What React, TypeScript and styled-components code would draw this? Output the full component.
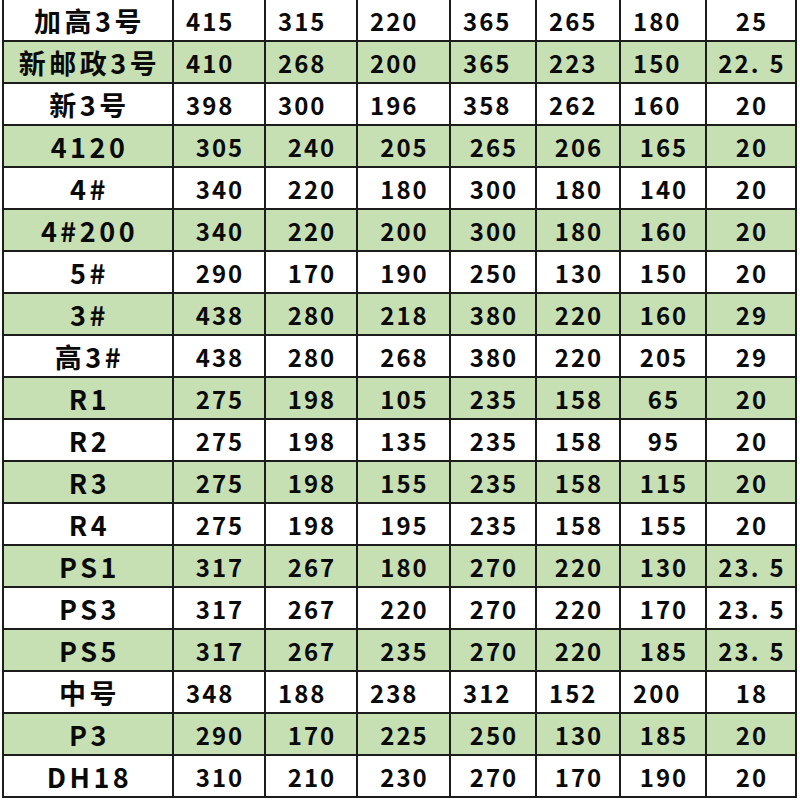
import React from 'react';
import styled, { createGlobalStyle } from 'styled-components';

const GlobalStyle = createGlobalStyle`
    html, body {
        margin: 0;
        padding: 0;
        background: #ffffff;
        overflow: hidden;
    }
`;

const Page = styled.div`
    width: 800px;
    height: 800px;
    overflow: hidden;
    padding-left: 2px;
    box-sizing: border-box;
`;

const Table = styled.table`
    margin-top: -2px;
    border-collapse: separate;
    border-spacing: 2px;
    background: #1c1c1c;
    table-layout: fixed;
    width: 795px;
    font-family: "Noto Sans CJK SC", "Noto Sans", sans-serif;
    color: #0a0a0a;
`;

const Row = styled.tr<{ $green: boolean }>`
    td {
        background: ${(p) => (p.$green ? '#c6e0b4' : '#ffffff')};
    }
`;

const LabelCell = styled.td`
    height: 38px;
    padding: 2px 0 0 3px;
    text-align: center;
    font-size: 27px;
    font-weight: 700;
    letter-spacing: 3.5px;
    line-height: 38px;
    white-space: nowrap;
    overflow: hidden;
`;

const NumCell = styled.td<{ $left?: boolean }>`
    height: 38px;
    padding: 2px 0 0 ${(p) => (p.$left ? '12px' : '2px')};
    text-align: ${(p) => (p.$left ? 'left' : 'center')};
    font-size: 24px;
    font-weight: 700;
    letter-spacing: 2px;
    line-height: 38px;
    white-space: nowrap;
    overflow: hidden;
`;

const Dot = styled.span`
    margin-right: 9px;
`;

const widths = [168, 90, 90, 91, 84, 82, 84, 88];

type RowData = { label: string; values: string[]; left?: boolean };

const rows: RowData[] = [
    { label: '加高3号', values: ['415', '315', '220', '365', '265', '180', '25'], left: true },
    { label: '新邮政3号', values: ['410', '268', '200', '365', '223', '150', '22.5'], left: true },
    { label: '新3号', values: ['398', '300', '196', '358', '262', '160', '20'], left: true },
    { label: '4120', values: ['305', '240', '205', '265', '206', '165', '20'] },
    { label: '4#', values: ['340', '220', '180', '300', '180', '140', '20'] },
    { label: '4#200', values: ['340', '220', '200', '300', '180', '160', '20'] },
    { label: '5#', values: ['290', '170', '190', '250', '130', '150', '20'] },
    { label: '3#', values: ['438', '280', '218', '380', '220', '160', '29'] },
    { label: '高3#', values: ['438', '280', '268', '380', '220', '205', '29'] },
    { label: 'R1', values: ['275', '198', '105', '235', '158', '65', '20'] },
    { label: 'R2', values: ['275', '198', '135', '235', '158', '95', '20'] },
    { label: 'R3', values: ['275', '198', '155', '235', '158', '115', '20'] },
    { label: 'R4', values: ['275', '198', '195', '235', '158', '155', '20'] },
    { label: 'PS1', values: ['317', '267', '180', '270', '220', '130', '23.5'] },
    { label: 'PS3', values: ['317', '267', '220', '270', '220', '170', '23.5'] },
    { label: 'PS5', values: ['317', '267', '235', '270', '220', '185', '23.5'] },
    { label: '中号', values: ['348', '188', '238', '312', '152', '200', '18'], left: true },
    { label: 'P3', values: ['290', '170', '225', '250', '130', '185', '20'] },
    { label: 'DH18', values: ['310', '210', '230', '270', '170', '190', '20'] },
];

const renderNum = (v: string) => {
    const [int, dec] = v.split('.');
    if (dec === undefined) return v;
    return (
        <>
            {int}
            <Dot>.</Dot>
            {dec}
        </>
    );
};

const App: React.FC = () => {
    return (
        <Page>
            <GlobalStyle />
            <Table>
                <colgroup>
                    {widths.map((w, i) => (
                        <col key={i} style={{ width: w }} />
                    ))}
                </colgroup>
                <tbody>
                    {rows.map((r, i) => (
                        <Row key={r.label} $green={i % 2 === 1}>
                            <LabelCell>{r.label}</LabelCell>
                            {r.values.map((v, j) => (
                                <NumCell key={j} $left={r.left && j < 6}>
                                    {renderNum(v)}
                                </NumCell>
                            ))}
                        </Row>
                    ))}
                </tbody>
            </Table>
        </Page>
    );
};

export default App;
